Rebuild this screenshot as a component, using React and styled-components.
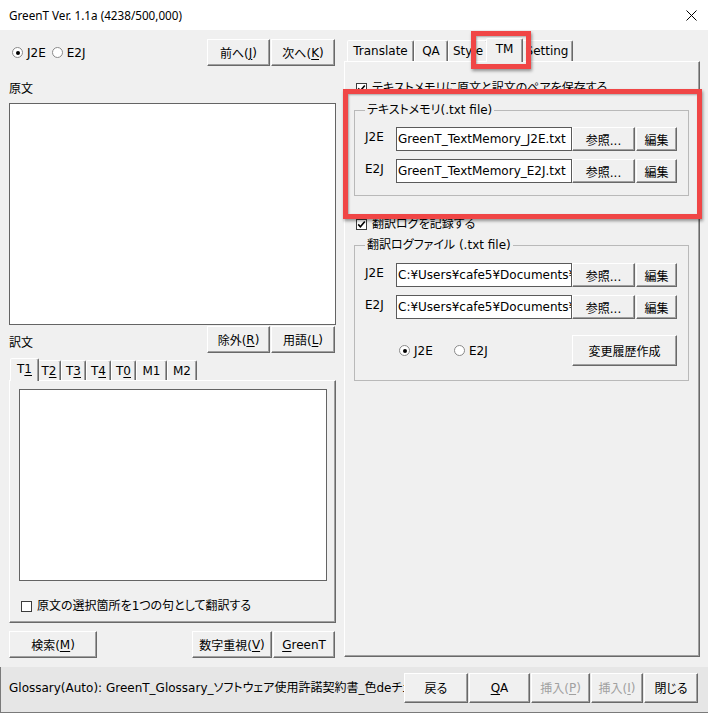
import React from "react";
import styled, { createGlobalStyle, css } from "styled-components";

const GlobalStyle = createGlobalStyle`
  html, body { margin: 0; padding: 0; background: #f0f0f0; }
  body {
    font-family: "DejaVu Sans", "Noto Sans CJK JP", sans-serif;
    font-size: 12px;
    font-feature-settings: "palt";
    color: #000;
  }
  * { box-sizing: border-box; }
  button, input, textarea { font-feature-settings: "palt"; }
`;

const Window = styled.div`
  position: relative;
  width: 708px;
  height: 713px;
  background: #f0f0f0;
  display: flex;
  flex-direction: column;
  overflow: hidden;
`;

const TitleBar = styled.div`
  height: 30px;
  flex: none;
  background: #fff;
  display: flex;
  align-items: center;
  justify-content: space-between;
  padding: 0 11px 0 9px;
`;

const TitleText = styled.span`
  font-family: "Noto Sans", "Noto Sans CJK JP", sans-serif;
  font-size: 11.7px;
`;

const CloseIcon = styled.svg`
  width: 11px;
  height: 11px;
  display: block;
`;

const Main = styled.div`
  flex: 1;
  min-height: 0;
  display: flex;
  gap: 8px;
  padding: 9px 0 0 9px;
`;

const LeftCol = styled.div`
  width: 327px;
  flex: none;
  display: flex;
  flex-direction: column;
`;

const TopRow = styled.div`
  height: 27px;
  display: flex;
  align-items: center;
  justify-content: space-between;
  padding-right: 1px;
`;

const RadioGroup = styled.div`
  display: flex;
  align-items: center;
  margin-left: ${(p) => p.$ml || 0}px;
`;

const RadioItem = styled.label`
  display: flex;
  align-items: center;
  gap: 4px;
  line-height: 16px;
  width: ${(p) => (p.$w ? `${p.$w}px` : "auto")};
  margin-right: ${(p) => p.$mr || 0}px;
`;

const RadioCircle = styled.span`
  position: relative;
  width: 11px;
  height: 11px;
  flex: none;
  border-radius: 50%;
  border: 1px solid #8a8a8a;
  background: #fff;
  ${(p) =>
    p.$on &&
    css`
      &::after {
        content: "";
        position: absolute;
        left: 2.5px;
        top: 2.5px;
        width: 4px;
        height: 4px;
        border-radius: 50%;
        background: #000;
      }
    `}
`;

const BtnGroup = styled.div`
  display: flex;
  gap: 1px;
`;

const Btn = styled.button`
  width: ${(p) => p.$w}px;
  height: ${(p) => p.$h || 27}px;
  flex: none;
  margin: 0;
  padding: 0;
  font: inherit;
  color: ${(p) => (p.disabled ? "#a0a0a0" : "#000")};
  background: #f0f0f0;
  border: 1px solid;
  border-color: #fff #696969 #696969 #fff;
  box-shadow: inset -1px -1px #a0a0a0;
  display: flex;
  align-items: center;
  justify-content: center;
  white-space: nowrap;
  u { text-decoration-thickness: 1px; text-underline-offset: 2px; }
`;

const SourceLabel = styled.div`
  height: 16px;
  line-height: 16px;
  margin: 15px 0 6px;
`;

const TextBox = styled.textarea`
  display: block;
  width: 100%;
  height: ${(p) => p.$h}px;
  flex: none;
  margin: 0;
  padding: 2px;
  resize: none;
  outline: none;
  font: inherit;
  background: #fff;
  border: 1px solid #646464;
`;

const TargetRow = styled.div`
  display: flex;
  align-items: flex-end;
  justify-content: space-between;
  margin-top: 1px;
  padding-right: 1px;
`;

const TargetLabel = styled.span`
  height: 16px;
  line-height: 16px;
  margin-bottom: 2px;
`;

const TabStrip = styled.div`
  display: flex;
  align-items: flex-end;
  height: ${(p) => p.$h}px;
  flex: none;
  margin-top: ${(p) => p.$mt || 0}px;
  padding-left: ${(p) => p.$pl}px;
  position: relative;
  z-index: 2;
`;

const Tab = styled.div`
  width: ${(p) => p.$w}px;
  height: ${(p) => p.$h}px;
  flex: none;
  background: #f0f0f0;
  border: 1px solid;
  border-bottom: none;
  border-color: #fff #696969 transparent #fff;
  border-radius: 2px 2px 0 0;
  box-shadow: inset -1px 0 #a0a0a0;
  display: flex;
  align-items: center;
  justify-content: center;
  white-space: nowrap;
  u { text-decoration-thickness: 1px; text-underline-offset: 2px; }
  ${(p) =>
    p.$active &&
    css`
      width: ${p.$w + 4}px;
      height: ${p.$h + 3}px;
      margin: 0 -2px -1px;
      position: relative;
      z-index: 3;
      padding-bottom: 3px;
    `}
`;

const TabPanel = styled.div`
  display: flex;
  flex-direction: column;
  background: #f0f0f0;
  border: 1px solid;
  border-color: #fff #696969 #696969 #fff;
  box-shadow: inset -1px -1px #a0a0a0;
`;

const LeftPanel = styled(TabPanel)`
  height: 243px;
  padding: 8px 8px 8px 9px;
`;

const CheckRow = styled.label`
  display: flex;
  align-items: center;
  gap: 5px;
  height: 16px;
  line-height: 16px;
  margin: ${(p) => p.$mt || 0}px 0 0 2px;
  white-space: nowrap;
`;

const CheckBoxBox = styled.span`
  width: 11px;
  height: 11px;
  flex: none;
  border: 1px solid #3c3c3c;
  background: #fff;
  display: flex;
  align-items: center;
  justify-content: center;
`;

const BottomRow = styled.div`
  display: flex;
  justify-content: space-between;
  margin-top: 8px;
  padding-right: 1px;
`;

const RightCol = styled.div`
  width: 356px;
  flex: none;
  display: flex;
  flex-direction: column;
`;

const RightPanel = styled(TabPanel)`
  height: 596px;
  padding: 18px 10px 0 9px;
`;

const Group = styled.fieldset`
  margin: ${(p) => p.$mt}px 0 0;
  padding: 0 11px ${(p) => p.$pb}px 10px;
  min-width: 0;
  border: 1px solid #b9b9b9;
`;

const Legend = styled.legend`
  padding: 0 2px;
  height: 16px;
  line-height: 16px;
  white-space: nowrap;
`;

const GroupBody = styled.div`
  display: flex;
  flex-direction: column;
  gap: 8px;
  padding-top: ${(p) => p.$pt}px;
`;

const FileRow = styled.div`
  display: flex;
  align-items: flex-start;
  height: 24px;
`;

const RowLabel = styled.span`
  width: 31px;
  flex: none;
  line-height: 16px;
  padding-top: 2px;
`;

const FileInput = styled.input`
  width: 176px;
  height: 24px;
  flex: none;
  margin: 0;
  padding: 0 0 0 1px;
  font: inherit;
  color: #000;
  background: #fff;
  border: 1px solid #5a5a5a;
  outline: none;
`;

const FileButtons = styled.div`
  display: flex;
  gap: 1px;
`;

const LogOptionRow = styled.div`
  display: flex;
  align-items: center;
  height: 31px;
  margin-top: 16px;
`;

const LogRadios = styled.div`
  display: flex;
  align-items: center;
  margin-left: 34px;
  flex: 1;
`;

const StatusBar = styled.div`
  height: 46px;
  flex: none;
  display: flex;
  align-items: center;
  padding: 6px 10px 10px 9px;
  background: #e6e6e6;
  border-left: 1px solid #7a7a7a;
  border-bottom: 1px solid #7a7a7a;
`;

const StatusText = styled.div`
  flex: 1;
  min-width: 0;
  overflow: hidden;
  white-space: nowrap;
  text-overflow: clip;
  line-height: 16px;
  margin-left: -1px;
`;

const Callout = styled.div`
  position: absolute;
  left: ${(p) => p.$x}px;
  top: ${(p) => p.$y}px;
  width: ${(p) => p.$w}px;
  height: ${(p) => p.$h}px;
  border: 5px solid #f04646;
  box-shadow: 1px 2px 3px rgba(0, 0, 0, 0.4), inset 1px 1px 2px rgba(0, 0, 0, 0.3);
  pointer-events: none;
  z-index: 10;
`;

function Radio({ on, label, mr, w }) {
  return (
    <RadioItem $mr={mr} $w={w}>
      <RadioCircle $on={on} />
      <span>{label}</span>
    </RadioItem>
  );
}

function Check({ checked, label, mt }) {
  return (
    <CheckRow $mt={mt}>
      <CheckBoxBox>
        {checked && (
          <svg width="9" height="9" viewBox="0 0 9 9">
            <path d="M1.2 4.4 L3.4 6.8 L7.8 1.6" fill="none" stroke="#000" strokeWidth="1.6" />
          </svg>
        )}
      </CheckBoxBox>
      <span>{label}</span>
    </CheckRow>
  );
}

function FileLine({ label, value }) {
  return (
    <FileRow>
      <RowLabel>{label}</RowLabel>
      <FileInput readOnly value={value} />
      <FileButtons>
        <Btn $w={63} $h={24}>参照...</Btn>
        <Btn $w={41} $h={24}>編集</Btn>
      </FileButtons>
    </FileRow>
  );
}

const leftTabs = [
  { k: "T1", w: 25, node: <>T<u>1</u></>, active: true },
  { k: "T2", w: 24, node: <>T<u>2</u></> },
  { k: "T3", w: 25, node: <>T<u>3</u></> },
  { k: "T4", w: 25, node: <>T<u>4</u></> },
  { k: "T0", w: 25, node: <>T<u>0</u></> },
  { k: "M1", w: 31, node: <>M1</> },
  { k: "M2", w: 30, node: <>M2</> },
];

const rightTabs = [
  { k: "Translate", w: 67 },
  { k: "QA", w: 34 },
  { k: "Style", w: 40 },
  { k: "TM", w: 33, active: true },
  { k: "Setting", w: 52 },
];

const logPath = "C:¥Users¥cafe5¥Documents¥GreenT¥Log";

export default function App() {
  return (
    <>
      <GlobalStyle />
      <Window>
        <TitleBar>
          <TitleText>GreenT Ver. 1.1a (4238/500,000)</TitleText>
          <CloseIcon viewBox="0 0 11 11">
            <path d="M0.5 0.5 L10.5 10.5 M10.5 0.5 L0.5 10.5" stroke="#000" strokeWidth="1" />
          </CloseIcon>
        </TitleBar>

        <Main>
          <LeftCol>
            <TopRow>
              <RadioGroup $ml={3}>
                <Radio on label="J2E" mr={6} />
                <Radio label="E2J" />
              </RadioGroup>
              <BtnGroup>
                <Btn $w={63}>前へ(<u>J</u>)</Btn>
                <Btn $w={64}>次へ(<u>K</u>)</Btn>
              </BtnGroup>
            </TopRow>

            <SourceLabel>原文</SourceLabel>
            <TextBox $h={222} readOnly />

            <TargetRow>
              <TargetLabel>訳文</TargetLabel>
              <BtnGroup>
                <Btn $w={63}>除外(<u>R</u>)</Btn>
                <Btn $w={64}>用語(<u>L</u>)</Btn>
              </BtnGroup>
            </TargetRow>

            <TabStrip $h={23} $mt={4} $pl={3}>
              {leftTabs.map((t) => (
                <Tab key={t.k} $w={t.w} $h={20} $active={t.active}>
                  {t.node}
                </Tab>
              ))}
            </TabStrip>
            <LeftPanel>
              <TextBox $h={192} readOnly />
              <Check label="原文の選択箇所を1つの句として翻訳する" mt={17} />
            </LeftPanel>

            <BottomRow>
              <Btn $w={88}>検索(<u>M</u>)</Btn>
              <BtnGroup>
                <Btn $w={80}>数字重視(<u>V</u>)</Btn>
                <Btn $w={62}><u>G</u>reenT</Btn>
              </BtnGroup>
            </BottomRow>
          </LeftCol>

          <RightCol>
            <TabStrip $h={22} $pl={3}>
              {rightTabs.map((t) => (
                <Tab key={t.k} $w={t.w} $h={21} $active={t.active}>
                  {t.k}
                </Tab>
              ))}
            </TabStrip>
            <RightPanel>
              <Check checked label="テキストメモリに原文と訳文のペアを保存する" />
              <Group $mt={6} $pb={12}>
                <Legend>テキストメモリ(.txt file)</Legend>
                <GroupBody $pt={9}>
                  <FileLine label="J2E" value="GreenT_TextMemory_J2E.txt" />
                  <FileLine label="E2J" value="GreenT_TextMemory_E2J.txt" />
                </GroupBody>
              </Group>

              <Check checked label="翻訳ログを記録する" mt={20} />
              <Group $mt={5} $pb={14}>
                <Legend>翻訳ログファイル (.txt file)</Legend>
                <GroupBody $pt={10}>
                  <FileLine label="J2E" value={logPath} />
                  <FileLine label="E2J" value={logPath} />
                </GroupBody>
                <LogOptionRow>
                  <LogRadios>
                    <Radio on label="J2E" w={55} />
                    <Radio label="E2J" />
                  </LogRadios>
                  <Btn $w={105} $h={31}>変更履歴作成</Btn>
                </LogOptionRow>
              </Group>
            </RightPanel>
          </RightCol>
        </Main>

        <StatusBar>
          <StatusText>
            Glossary(Auto): GreenT_Glossary_ソフトウェア使用許諾契約書_色deチェック
          </StatusText>
          <BtnGroup>
            <Btn $w={64} $h={30}>戻る</Btn>
            <Btn $w={61} $h={30}><u>Q</u>A</Btn>
            <Btn $w={59} $h={30} disabled>挿入(<u>P</u>)</Btn>
            <Btn $w={52} $h={30} disabled>挿入(<u>I</u>)</Btn>
            <Btn $w={54} $h={30}>閉じる</Btn>
          </BtnGroup>
        </StatusBar>

        <Callout $x={471} $y={31} $w={60} $h={38} />
        <Callout $x={343} $y={89} $w={359} $h={130} />
      </Window>
    </>
  );
}
